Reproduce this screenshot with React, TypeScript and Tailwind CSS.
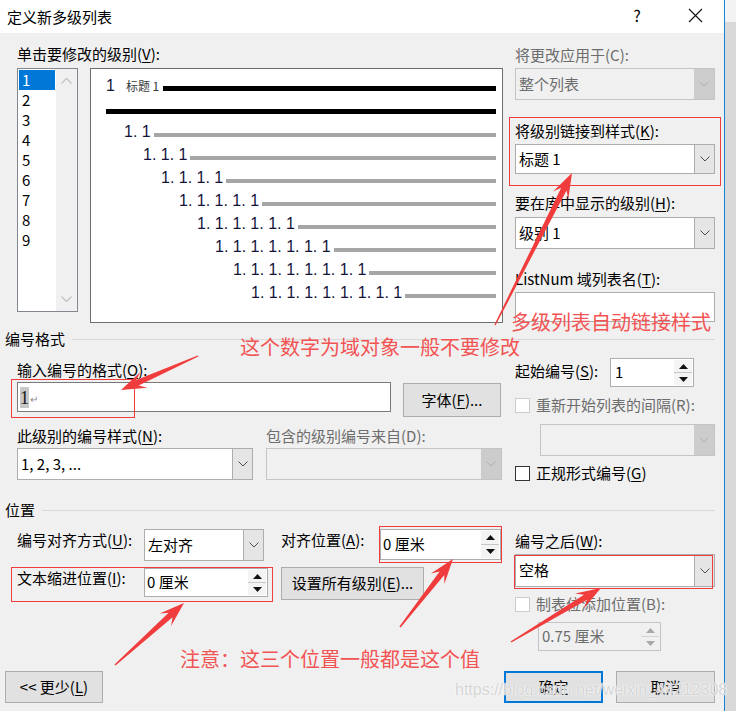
import React from "react";

const K = ({ c }: { c: string }) => (
  <span className="underline underline-offset-[2px] decoration-1">{c}</span>
);

function Label({
  children,
  disabled = false,
  cls = "",
}: {
  children: React.ReactNode;
  disabled?: boolean;
  cls?: string;
}) {
  return (
    <div
      className={`h-[20px] leading-[20px] whitespace-nowrap ${
        disabled ? "text-[#6d6d6d]" : "text-black"
      } ${cls}`}
    >
      {children}
    </div>
  );
}

function Chevron({ color }: { color: string }) {
  return (
    <svg width="10" height="6" viewBox="0 0 10 6">
      <path d="M0.5 0.5 L5 5 L9.5 0.5" fill="none" stroke={color} strokeWidth="1" />
    </svg>
  );
}

function Combo({
  cls,
  text,
  disabled = false,
}: {
  cls: string;
  text?: React.ReactNode;
  disabled?: boolean;
}) {
  return (
    <div
      className={`flex border ${
        disabled ? "border-[#c4c4c4] bg-[#f0f0f0]" : "border-[#adadad] bg-white"
      } ${cls}`}
    >
      <div
        className={`flex-1 flex items-center pl-[3px] whitespace-nowrap ${
          disabled ? "text-[#6d6d6d]" : "text-black"
        }`}
      >
        {text}
      </div>
      <div
        className={`w-[20px] flex items-center justify-center ${
          disabled ? "bg-[#cccccc]" : "bg-[#e5e5e5] border-l border-[#adadad]"
        }`}
      >
        <Chevron color={disabled ? "#b0b0b0" : "#505050"} />
      </div>
    </div>
  );
}

function Tri({ up, color }: { up: boolean; color: string }) {
  return (
    <svg width="9" height="5" viewBox="0 0 9 5">
      <path d={up ? "M0 5 L4.5 0 L9 5 Z" : "M0 0 L4.5 5 L9 0 Z"} fill={color} />
    </svg>
  );
}

function Spin({
  cls,
  text,
  disabled = false,
  pad = "pl-[2px]",
}: {
  cls: string;
  text: string;
  disabled?: boolean;
  pad?: string;
}) {
  const tc = disabled ? "#a8a8a8" : "#111111";
  return (
    <div
      className={`flex border ${
        disabled ? "border-[#c4c4c4] bg-[#f0f0f0] text-[#6d6d6d]" : "border-[#adadad] bg-white text-black"
      } ${cls}`}
    >
      <div className={`flex-1 flex items-center whitespace-nowrap ${pad}`}>{text}</div>
      <div className="w-[20px] flex flex-col p-[1px]">
        <div
          className={`flex-1 flex items-center justify-center border-b ${
            disabled ? "border-[#d4d4d4] bg-[#f0f0f0]" : "border-[#c8c8c8] bg-[#f4f4f4]"
          }`}
        >
          <Tri up color={tc} />
        </div>
        <div
          className={`flex-1 flex items-center justify-center ${
            disabled ? "bg-[#f0f0f0]" : "bg-[#f4f4f4]"
          }`}
        >
          <Tri up={false} color={tc} />
        </div>
      </div>
    </div>
  );
}

function Btn({
  cls,
  children,
  primary = false,
}: {
  cls: string;
  children: React.ReactNode;
  primary?: boolean;
}) {
  return (
    <div
      className={`flex items-center justify-center whitespace-nowrap bg-[#e1e1e1] ${
        primary ? "border-2 border-[#0078d7]" : "border border-[#adadad]"
      } ${cls}`}
    >
      {children}
    </div>
  );
}

function Check({ disabled = false }: { disabled?: boolean }) {
  return (
    <div
      className={`w-[15px] h-[15px] shrink-0 border bg-white ${
        disabled ? "border-[#cccccc]" : "border-[#333333]"
      }`}
    />
  );
}

function ListBox() {
  const items = [1, 2, 3, 4, 5, 6, 7, 8, 9];
  return (
    <div className="w-[61px] h-[244px] border border-[#828790] bg-white flex">
      <div className="flex-1 pt-[1px] pl-[1px] flex flex-col">
        {items.map((n) => (
          <div
            key={n}
            className={`h-[20px] w-[36px] leading-[20px] pl-[3px] ${
              n === 1 ? "bg-[#0078d7] text-white" : "text-black"
            }`}
          >
            {n}
          </div>
        ))}
      </div>
      <div className="w-[21px] bg-[#f0f0f0] flex flex-col items-center justify-between py-[9px]">
        <svg width="11" height="6" viewBox="0 0 11 6">
          <path d="M0.5 5.5 L5.5 0.5 L10.5 5.5" fill="none" stroke="#c2c2c2" strokeWidth="1.3" />
        </svg>
        <svg width="11" height="6" viewBox="0 0 11 6">
          <path d="M0.5 0.5 L5.5 5.5 L10.5 0.5" fill="none" stroke="#c2c2c2" strokeWidth="1.3" />
        </svg>
      </div>
    </div>
  );
}

const levels = [
  { t: "1. 1", ml: "ml-[18px]" },
  { t: "1. 1. 1", ml: "ml-[37px]" },
  { t: "1. 1. 1. 1", ml: "ml-[55px]" },
  { t: "1. 1. 1. 1. 1", ml: "ml-[73px]" },
  { t: "1. 1. 1. 1. 1. 1", ml: "ml-[91px]" },
  { t: "1. 1. 1. 1. 1. 1. 1", ml: "ml-[109px]" },
  { t: "1. 1. 1. 1. 1. 1. 1. 1", ml: "ml-[127px]" },
  { t: "1. 1. 1. 1. 1. 1. 1. 1. 1", ml: "ml-[145px]" },
];

function Preview() {
  return (
    <div className="ml-[12px] w-[413px] h-[255px] border border-[#6e6e6e] bg-white pt-[9px] pl-[15px] pr-[6px] flex flex-col font-['Liberation_Sans',sans-serif] text-[16px] leading-[16px] text-[#14143a]">
      <div className="h-[23px] flex items-baseline">
        <span>1</span>
        <span className="ml-[11px] text-[12px] text-[#3a3a3a] font-['Noto_Sans_CJK_SC',sans-serif]">
          标题 1
        </span>
        <div className="ml-[4px] flex-1 h-[5px] bg-black" />
      </div>
      <div className="h-[23px] flex items-baseline">
        <span className="w-0 overflow-hidden">{"\u00a0"}</span>
        <div className="flex-1 h-[5px] bg-black" />
      </div>
      {levels.map((l) => (
        <div key={l.t} className="h-[23px] flex items-baseline">
          <span className={`${l.ml} whitespace-pre`}>{l.t}</span>
          <div className="ml-[3px] flex-1 h-[4px] bg-[#a6a6a6]" />
        </div>
      ))}
    </div>
  );
}

function Header({ text }: { text: string }) {
  return (
    <div className="h-[20px] flex items-center">
      <span className="leading-[20px] whitespace-nowrap">{text}</span>
      <div className="ml-[7px] flex-1 h-px bg-[#d9d9d9]" />
    </div>
  );
}

function arrowPoints(x1: number, y1: number, x2: number, y2: number) {
  const dx = x2 - x1;
  const dy = y2 - y1;
  const L = Math.hypot(dx, dy);
  const ux = dx / L;
  const uy = dy / L;
  const nx = -uy;
  const ny = ux;
  const headL = 25;
  const headW = 8.5;
  const neckL = 18;
  const neckW = 3;
  const tailW = 0.7;
  const p = (a: number, b: number) =>
    `${(x2 - ux * a + nx * b).toFixed(1)},${(y2 - uy * a + ny * b).toFixed(1)}`;
  return [
    `${(x1 + nx * tailW).toFixed(1)},${(y1 + ny * tailW).toFixed(1)}`,
    p(neckL, neckW),
    p(headL, headW),
    `${x2},${y2}`,
    p(headL, -headW),
    p(neckL, -neckW),
    `${(x1 - nx * tailW).toFixed(1)},${(y1 - ny * tailW).toFixed(1)}`,
  ].join(" ");
}

const arrows: [number, number, number, number][] = [
  [495, 325, 572, 173],
  [198, 356, 121, 390],
  [115, 665, 184, 603],
  [400, 627, 453, 559],
  [511, 642, 601, 588],
];

function Overlay() {
  return (
    <div className="absolute inset-0 pointer-events-none">
      <div className="absolute left-[509px] top-[117px] w-[212px] h-[69px] border border-[#f03c3c]" />
      <div className="absolute left-[11px] top-[379px] w-[124px] h-[39px] border border-[#f03c3c]" />
      <div className="absolute left-[379px] top-[526px] w-[123px] h-[37px] border border-[#f03c3c]" />
      <div className="absolute left-[11px] top-[567px] w-[262px] h-[35px] border border-[#f03c3c]" />
      <div className="absolute left-[514px] top-[555px] w-[199px] h-[34px] border border-[#f03c3c]" />

      <div className="absolute left-[511px] top-[310px] text-[20px] leading-[24px] text-[#f25454] whitespace-nowrap">
        多级列表自动链接样式
      </div>
      <div className="absolute left-[240px] top-[335px] text-[20px] leading-[24px] text-[#f25454] whitespace-nowrap">
        这个数字为域对象一般不要修改
      </div>
      <div className="absolute left-[180px] top-[647px] text-[20px] leading-[24px] text-[#f25454] whitespace-nowrap">
        注意：这三个位置一般都是这个值
      </div>

      <svg className="absolute left-0 top-0" width="736" height="711" viewBox="0 0 736 711">
        {arrows.map((a, i) => (
          <polygon key={i} points={arrowPoints(a[0], a[1], a[2], a[3])} fill="#f03c3c" />
        ))}
      </svg>

      <div className="absolute left-[455px] top-[680px] font-['Liberation_Sans',sans-serif] text-[16px] leading-[20px] text-[#c9c9c9]/80 whitespace-nowrap [text-shadow:0_0_1px_#ffffff,0_0_2px_#ffffff]">
        https://blog.csdn.net/weixin_44212308
      </div>
    </div>
  );
}

export default function App() {
  return (
    <div className="relative w-[736px] h-[711px] overflow-hidden flex font-['Noto_Sans_CJK_SC',sans-serif] text-[15px] text-black">
      <div className="w-[725px] h-full flex flex-col border-r border-[#1883d7]">
        {/* Title bar */}
        <div className="h-[33px] shrink-0 bg-white flex items-center pl-[7px]">
          <span className="leading-[20px]">定义新多级列表</span>
          <div className="ml-auto w-[20px] text-center text-[16px] leading-[20px] mt-[-3px]">?</div>
          <div className="ml-[38px] mr-[19px] w-[20px] h-[20px] flex items-center justify-center mt-[-3px]">
            <svg width="15" height="15" viewBox="0 0 15 15">
              <path d="M1 1 L14 14 M14 1 L1 14" stroke="#111" strokeWidth="1.1" />
            </svg>
          </div>
        </div>

        {/* Body */}
        <div className="flex-1 bg-[#f0f0f0] flex flex-col pl-[5px] pr-[9px]">
          {/* Block 1 */}
          <div className="h-[296px] flex">
            <div className="w-[498px] pl-[12px] flex flex-col">
              <Label cls="mt-[11px]">
                单击要修改的级别(<K c="V" />):
              </Label>
              <div className="mt-[4px] flex items-start">
                <ListBox />
                <Preview />
              </div>
            </div>
            <div className="ml-[12px] w-[200px] flex flex-col">
              <Label cls="mt-[12px]" disabled>
                将更改应用于(C):
              </Label>
              <Combo cls="mt-[3px] h-[32px]" text="整个列表" disabled />
              <Label cls="mt-[21px]">
                将级别链接到样式(<K c="K" />):
              </Label>
              <Combo cls="mt-[3px] h-[30px]" text="标题 1" />
              <Label cls="mt-[19px]">
                要在库中显示的级别(<K c="H" />):
              </Label>
              <Combo cls="mt-[4px] h-[32px]" text="级别 1" />
              <Label cls="mt-[20px]">
                ListNum 域列表名(<K c="T" />):
              </Label>
              <div className="mt-[3px] h-[30px] border border-[#adadad] bg-white" />
            </div>
          </div>

          <Header text="编号格式" />

          {/* Block 2 */}
          <div className="h-[151px] flex">
            <div className="w-[498px] pl-[12px] flex flex-col">
              <Label cls="mt-[11px]">
                输入编号的格式(<K c="O" />):
              </Label>
              <div className="mt-[2px] h-[35px] flex items-start">
                <div className="w-[374px] h-[30px] border border-[#7a7a7a] bg-white flex items-center pl-[2px]">
                  <span className="bg-[#c8c8c8] h-[21px] w-[9px] flex justify-center font-['Liberation_Serif',serif] text-[19px] leading-[22px] text-[#222]">
                    1
                  </span>
                  <span className="ml-[1px] mt-[3px] text-[10px] leading-[10px] text-[#8a8a8a]">↵</span>
                </div>
                <Btn cls="ml-[12px] mt-[1px] w-[98px] h-[34px]">
                  字体(<K c="F" />)...
                </Btn>
              </div>
              <div className="mt-[9px] flex">
                <Label cls="w-[249px]">
                  此级别的编号样式(<K c="N" />):
                </Label>
                <Label disabled>包含的级别编号来自(D):</Label>
              </div>
              <div className="mt-[2px] flex">
                <Combo cls="w-[236px] h-[32px]" text="1, 2, 3, ..." />
                <Combo cls="ml-[13px] w-[236px] h-[32px]" disabled />
              </div>
            </div>
            <div className="ml-[12px] w-[200px] flex flex-col">
              <div className="mt-[9px] h-[29px] flex items-center">
                <Label cls="w-[95px] mt-[-3px]">
                  起始编号(<K c="S" />):
                </Label>
                <Spin cls="w-[84px] h-[29px]" text="1" pad="pl-[4px]" />
              </div>
              <div className="mt-[8px] h-[20px] flex items-center">
                <Check disabled />
                <Label cls="ml-[6px]" disabled>
                  重新开始列表的间隔(R):
                </Label>
              </div>
              <Combo cls="mt-[9px] ml-[25px] w-[175px] h-[32px]" disabled />
              <div className="mt-[7px] h-[20px] flex items-center">
                <Check />
                <Label cls="ml-[6px]">
                  正规形式编号(<K c="G" />)
                </Label>
              </div>
            </div>
          </div>

          <Header text="位置" />

          {/* Block 3 */}
          <div className="h-[151px] flex">
            <div className="w-[498px] pl-[12px] flex flex-col">
              <div className="mt-[9px] h-[32px] flex items-start">
                <Label cls="w-[127px] mt-[1px]">
                  编号对齐方式(<K c="U" />):
                </Label>
                <Combo cls="w-[120px] h-[32px]" text="左对齐" />
                <Label cls="ml-[17px] w-[99px] mt-[1px]">
                  对齐位置(<K c="A" />):
                </Label>
                <Spin cls="w-[121px] h-[31px]" text="0 厘米" />
              </div>
              <div className="mt-[6px] flex items-start">
                <Label cls="w-[127px] mt-[1px]">
                  文本缩进位置(<K c="I" />):
                </Label>
                <Spin cls="mt-[1px] w-[124px] h-[29px]" text="0 厘米" />
                <Btn cls="ml-[13px] w-[143px] h-[33px]">
                  设置所有级别(<K c="E" />)...
                </Btn>
              </div>
            </div>
            <div className="ml-[12px] w-[200px] flex flex-col">
              <Label cls="mt-[11px]">
                编号之后(<K c="W" />):
              </Label>
              <Combo cls="mt-[3px] h-[33px]" text="空格" />
              <div className="mt-[7px] h-[20px] flex items-center">
                <Check disabled />
                <Label cls="ml-[6px]" disabled>
                  制表位添加位置(B):
                </Label>
              </div>
              <Spin cls="mt-[8px] ml-[23px] w-[123px] h-[29px]" text="0.75 厘米" disabled pad="pl-[3px]" />
            </div>
          </div>

          {/* Buttons */}
          <div className="h-[32px] flex">
            <Btn cls="w-[98px] h-[32px]">
              {"<< "}更少(<K c="L" />)
            </Btn>
            <Btn cls="ml-auto w-[99px] h-[32px]" primary>
              确定
            </Btn>
            <Btn cls="ml-[13px] w-[99px] h-[32px]">取消</Btn>
          </div>
        </div>
      </div>
      <div className="flex-1 flex flex-col">
        <div className="h-[22px] bg-[#f3f3f3]" />
        <div className="flex-1 bg-[#d9d9d9]" />
      </div>
      <Overlay />
    </div>
  );
}
